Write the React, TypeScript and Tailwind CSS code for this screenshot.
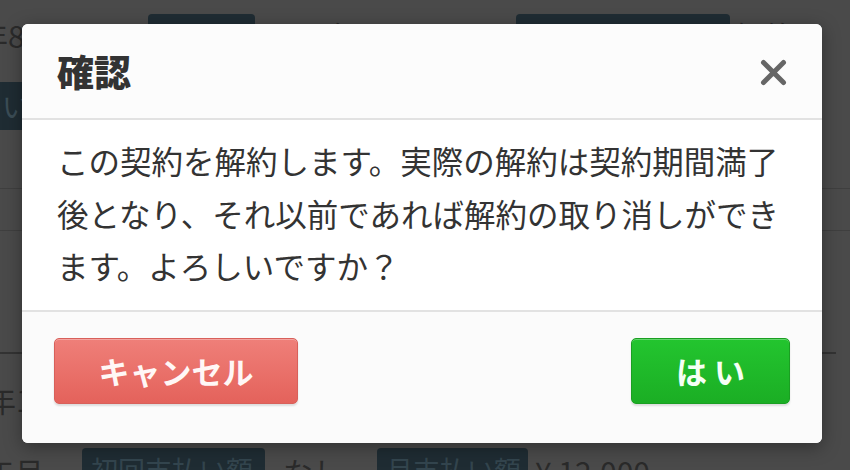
import React from "react";

export default function App() {
  return (
    <div className="relative h-[470px] w-[850px] overflow-hidden bg-[#4a4a4a] font-['Noto_Sans_CJK_JP',sans-serif]">
      {/* dimmed page behind */}
      <div className="flex flex-col text-[30px] leading-none text-[#2a2a2a]">
        <div className="mt-[14px] flex h-[44px] items-start whitespace-nowrap">
          <span className="ml-[-22px] mt-[6px] w-[170px] shrink-0">年8月1日</span>
          <span className="h-[44px] w-[107px] shrink-0 rounded-[4px] bg-[#1f2c33]" />
          <span className="ml-[7px] mt-[6px] w-[254px] shrink-0">2016年8月1日</span>
          <span className="h-[44px] w-[214px] shrink-0 rounded-[4px] bg-[#1f2c33]" />
          <span className="ml-[5px] mt-[6px] shrink-0">解約日</span>
        </div>
        <div className="mt-[24px] flex h-[48px] whitespace-nowrap">
          <span className="ml-[-6px] flex h-[48px] w-[180px] shrink-0 items-center rounded-[4px] bg-[#1f2c33] pl-[8px] text-[28px] text-[#3b4d56]">
            いアカウント
          </span>
        </div>
        <div className="mt-[58px] h-px bg-[#3f3f3f]" />
        <div className="mt-[41px] h-px bg-[#3f3f3f]" />
        <div className="mt-[121px] h-[2px] w-[836px] bg-[#333333]" />
        <div className="mt-[30px] ml-[-14px] whitespace-nowrap">年1月</div>
        <div className="mt-[34px] flex items-start whitespace-nowrap">
          <span className="ml-[-16px] mt-[8px] w-[98px] shrink-0">年月</span>
          <span className="flex h-[44px] w-[183px] shrink-0 items-start overflow-hidden rounded-[4px] bg-[#1f2c33] pl-[9px] pt-[8px] text-[27px] text-[#33454e]">
            初回支払い額
          </span>
          <span className="ml-[18px] mt-[8px] w-[94px] shrink-0">なし</span>
          <span className="flex h-[44px] w-[151px] shrink-0 items-start overflow-hidden rounded-[4px] bg-[#1f2c33] pl-[9px] pt-[8px] text-[27px] text-[#33454e]">
            月支払い額
          </span>
          <span className="ml-[7px] mt-[8px] shrink-0">¥ 12,000</span>
        </div>
      </div>

      {/* modal */}
      <div className="absolute left-[22px] top-[24px] flex h-[419px] w-[800px] flex-col overflow-hidden rounded-[6px] bg-white shadow-[0_4px_18px_rgba(0,0,0,0.35)]">
        <div className="flex h-[94px] items-center justify-between bg-[#fcfcfc] px-[35px]">
          <h1 className="text-[37px] font-black leading-none text-[#333333]">確認</h1>
          <svg width="27" height="27" viewBox="0 0 27 27" className="mt-[2px]">
            <path d="M3.5 3.5 L23.5 23.5 M23.5 3.5 L3.5 23.5" stroke="#666666" strokeWidth="5" strokeLinecap="round" />
          </svg>
        </div>
        <div className="h-[2px] bg-[#e2e2e2]" />
        <div className="h-[190px] bg-white px-[35px] pt-[14px] text-[31.5px] leading-[52.5px] text-[#333333]">
          この契約を解約します。実際の解約は契約期間満了後となり、それ以前であれば解約の取り消しができます。よろしいですか？
        </div>
        <div className="h-[2px] bg-[#e2e2e2]" />
        <div className="flex flex-1 items-start justify-between bg-[#fbfbfb] px-[32px] pt-[26px]">
          <button className="flex h-[66px] w-[244px] items-center justify-center rounded-[5px] border border-[#d8605a] bg-gradient-to-b from-[#ef7f79] to-[#e4625b] text-[31px] font-bold text-[#fff7f6] shadow-[inset_0_1px_0_rgba(255,255,255,0.3),0_2px_2px_rgba(0,0,0,0.12)]">
            キャンセル
          </button>
          <button className="flex h-[66px] w-[159px] items-center justify-center rounded-[5px] border border-[#1a9f22] bg-gradient-to-b from-[#23c52f] to-[#1bae24] text-[31px] font-bold text-[#f5fff5] shadow-[inset_0_1px_0_rgba(255,255,255,0.3),0_2px_2px_rgba(0,0,0,0.12)]">
            は い
          </button>
        </div>
      </div>
    </div>
  );
}
